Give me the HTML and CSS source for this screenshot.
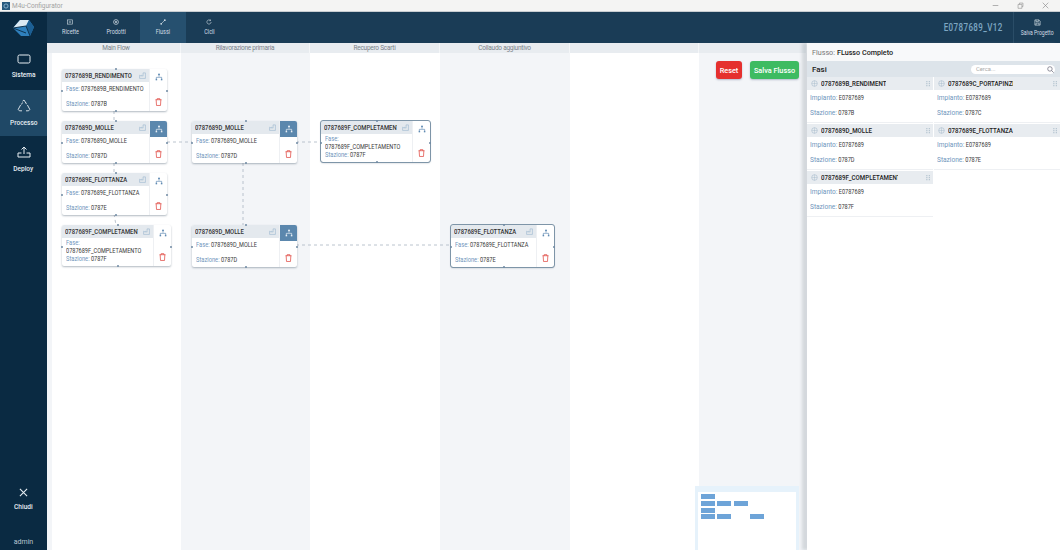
FILE: index.html
```html
<!DOCTYPE html>
<html lang="it">
<head>
<meta charset="utf-8">
<title>M4u-Configurator</title>
<link rel="stylesheet" href="styles.css">
</head>
<body>
<svg class="defs" width="0" height="0">
  <symbol id="i-tree" viewBox="0 0 12 12"><path d="M6 1.500v4M2 10V6.500h8V10" fill="none" stroke="currentColor" stroke-width="1"/><rect x="4.700" y="1" width="2.600" height="2.200" fill="currentColor"/><rect x="1" y="8.800" width="2.200" height="2.200" fill="currentColor"/><rect x="8.800" y="8.800" width="2.200" height="2.200" fill="currentColor"/></symbol>
  <symbol id="i-trash" viewBox="0 0 10 12"><path d="M.5 2.600h9M3 2.600V1h4v1.600M1.500 2.600l.5 8.600h6l.5-8.600" fill="none" stroke="currentColor" stroke-width="1.100"/></symbol>
  <symbol id="i-fact" viewBox="0 0 12 12"><path d="M1 11V5.500l3 1.700V5.500l3 1.700V1.500h4V11z" fill="none" stroke="currentColor" stroke-width=".9"/></symbol>
  <symbol id="i-cube" viewBox="0 0 12 12"><circle cx="6" cy="6" r="4.800" fill="none" stroke="currentColor" stroke-width=".9"/><path d="M1.500 6h9M6 1.200v9.600" stroke="currentColor" stroke-width=".7"/></symbol>
  <symbol id="i-grip" viewBox="0 0 6 8"><path d="M1 1v1.400M1 3.400v1.400M1 5.800v1.400M4 1v1.400M4 3.400v1.400M4 5.800v1.400" stroke="currentColor" stroke-width="1.400"/></symbol>
  <symbol id="i-save" viewBox="0 0 12 12"><path d="M1.500 1.500h7l2 2v7h-9zM3.500 1.500v3h4v-3M3.500 10.500v-3.500h5v3.500" fill="none" stroke="currentColor" stroke-width="1.100"/></symbol>
</svg>

<header class="titlebar">
  <div class="title-left">
    <svg class="title-logo" viewBox="0 0 10 10"><rect width="10" height="10" fill="#27597d"/><circle cx="5" cy="5" r="2.600" fill="none" stroke="#9cc3dd"/></svg>
    <span>M4u-Configurator</span>
  </div>
  <div class="winctl">
    <svg viewBox="0 0 10 10"><path d="M1 5h8" stroke="#888" stroke-width=".9"/></svg>
    <svg viewBox="0 0 10 10"><path d="M1.500 3.500h5.500v5.500h-5.500zM3.500 3.500V1.500h5v5H7" fill="none" stroke="#888" stroke-width=".8"/></svg>
    <svg viewBox="0 0 10 10"><path d="M1 1l8 8M9 1l-8 8" stroke="#888" stroke-width=".9"/></svg>
  </div>
</header>

<div class="app">
  <aside class="sidebar">
    <div class="logo">
      <svg viewBox="0 0 22 18" width="22" height="18"><path d="M0 9L7 1h9l5 7-4 9H8z" fill="#2f80bd"/><path d="M0 9L7 1h9L13 7z" fill="#dbe9f3"/><path d="M16 1l5 7-4 9-4-10z" fill="#1c5f94"/><path d="M0 9l13-2M13 7l4 10M0 9l13 5" fill="none" stroke="#0e3350" stroke-width="1"/></svg>
    </div>
    <a class="side-item">
      <svg viewBox="0 0 14 12" width="14" height="12"><rect x="1" y="2" width="12" height="8" rx="1.500" fill="none" stroke="currentColor"/></svg>
      <span>Sistema</span>
    </a>
    <a class="side-item active">
      <svg viewBox="0 0 14 14" width="14" height="14"><path d="M5.500 2.200L7 1l1.600 2.600M10.400 6l2.400 4.400-1.200 1.400H9M5 11.800H2.400L1.200 10.400 3.600 6M5.600 3.500L4.400 5.500M9.500 5.200L8.400 3" fill="none" stroke="currentColor" stroke-width=".9"/></svg>
      <span>Processo</span>
    </a>
    <a class="side-item">
      <svg viewBox="0 0 14 14" width="14" height="14"><path d="M1 8v4h12V8H9.500M4.500 8H1M7 9V2M4.500 4.500L7 2l2.500 2.500" fill="none" stroke="currentColor"/></svg>
      <span>Deploy</span>
    </a>
    <div class="side-spacer"></div>
    <a class="side-close">
      <svg viewBox="0 0 10 10" width="9" height="9"><path d="M1 1l8 8M9 1l-8 8" stroke="currentColor" stroke-width="1.200"/></svg>
      <span>Chiudi</span>
    </a>
    <div class="side-user">admin</div>
  </aside>

  <div class="main">
    <nav class="topbar">
      <a class="tab"><svg viewBox="0 0 10 10" width="6" height="6"><rect x="1" y="1.500" width="8" height="7" fill="none" stroke="currentColor"/><path d="M3 4h4M3 6h4" stroke="currentColor" stroke-width=".8"/></svg><span>Ricette</span></a>
      <a class="tab"><svg viewBox="0 0 10 10" width="6" height="6"><circle cx="5" cy="5" r="4" fill="none" stroke="currentColor" stroke-width="1.200"/><circle cx="5" cy="5" r="1.500" fill="currentColor"/></svg><span>Prodotti</span></a>
      <a class="tab on"><svg viewBox="0 0 10 10" width="6" height="6"><path d="M2 8l6-6" stroke="currentColor"/><circle cx="2" cy="8" r="1.500" fill="currentColor"/><circle cx="8" cy="2" r="1.500" fill="currentColor"/></svg><span>Flussi</span></a>
      <a class="tab"><svg viewBox="0 0 10 10" width="6" height="6"><path d="M8.500 5a3.500 3.500 0 1 1-1-2.500M7.500 .8v2h-2" fill="none" stroke="currentColor"/></svg><span>Cicli</span></a>
      <div class="top-spacer"></div>
      <div class="project">E0787689_V12</div>
      <a class="save-project"><svg width="7" height="7"><use href="#i-save"/></svg><span>Salva Progetto</span></a>
    </nav>

    <div class="content">
      <section class="canvas">
        <div class="col-heads">
          <div class="col-head c1">Main Flow</div>
          <div class="col-head c2">Rilavorazione primaria</div>
          <div class="col-head c3">Recupero Scarti</div>
          <div class="col-head c4">Collaudo aggiuntivo</div>
          <div class="col-head c5"></div>
          <div class="col-head c6"></div>
        </div>
        <div class="cols">
          <div class="col c1"></div>
          <div class="col gray c2"></div>
          <div class="col c3"></div>
          <div class="col gray c4"></div>
          <div class="col c5"></div>
          <div class="col gray c6"></div>
        </div>

        <svg class="edges" width="758" height="507" viewBox="0 0 758 507">
          <g fill="none" stroke="#a9b5c2" stroke-width=".8" stroke-dasharray="3 3">
            <path d="M67 68v10M67 120v10M67 171l2 11M120 99h25M249 99h25M196 120v62M249 202h155"/>
          </g>
        </svg>

        <article class="node n1">
          <div class="node-main">
            <div class="node-head"><b><span>0787689B_RENDIMENTO</span></b><svg width="7" height="7"><use href="#i-fact"/></svg></div>
            <div class="node-body">
              <p><em>Fase:</em> 0787689B_RENDIMENTO</p>
              <p><em>Stazione:</em> 0787B</p>
            </div>
          </div>
          <div class="node-act">
            <span class="act-top"><svg width="8" height="8"><use href="#i-tree"/></svg></span>
            <span class="act-del"><svg width="7" height="8"><use href="#i-trash"/></svg></span>
          </div>
          <i class="dot t"></i><i class="dot b"></i><i class="dot l"></i><i class="dot r"></i>
        </article>

        <article class="node n2">
          <div class="node-main">
            <div class="node-head"><b><span>0787689D_MOLLE</span></b><svg width="7" height="7"><use href="#i-fact"/></svg></div>
            <div class="node-body">
              <p><em>Fase:</em> 0787689D_MOLLE</p>
              <p><em>Stazione:</em> 0787D</p>
            </div>
          </div>
          <div class="node-act">
            <span class="act-top sel"><svg width="8" height="8"><use href="#i-tree"/></svg></span>
            <span class="act-del"><svg width="7" height="8"><use href="#i-trash"/></svg></span>
          </div>
          <i class="dot t"></i><i class="dot b"></i><i class="dot l"></i><i class="dot r"></i>
        </article>

        <article class="node n3">
          <div class="node-main">
            <div class="node-head"><b><span>0787689E_FLOTTANZA</span></b><svg width="7" height="7"><use href="#i-fact"/></svg></div>
            <div class="node-body">
              <p><em>Fase:</em> 0787689E_FLOTTANZA</p>
              <p><em>Stazione:</em> 0787E</p>
            </div>
          </div>
          <div class="node-act">
            <span class="act-top"><svg width="8" height="8"><use href="#i-tree"/></svg></span>
            <span class="act-del"><svg width="7" height="8"><use href="#i-trash"/></svg></span>
          </div>
          <i class="dot t"></i><i class="dot b"></i><i class="dot l"></i><i class="dot r"></i>
        </article>

        <article class="node n4 wide">
          <div class="node-main">
            <div class="node-head"><b><span>0787689F_COMPLETAMENTO</span></b><svg width="7" height="7"><use href="#i-fact"/></svg></div>
            <div class="node-body tall">
              <p><em>Fase:</em><br>0787689F_COMPLETAMENTO</p>
              <p><em>Stazione:</em> 0787F</p>
            </div>
          </div>
          <div class="node-act">
            <span class="act-top"><svg width="8" height="8"><use href="#i-tree"/></svg></span>
            <span class="act-del"><svg width="7" height="8"><use href="#i-trash"/></svg></span>
          </div>
          <i class="dot t"></i><i class="dot b"></i><i class="dot l"></i><i class="dot r"></i>
        </article>

        <article class="node n5">
          <div class="node-main">
            <div class="node-head"><b><span>0787689D_MOLLE</span></b><svg width="7" height="7"><use href="#i-fact"/></svg></div>
            <div class="node-body">
              <p><em>Fase:</em> 0787689D_MOLLE</p>
              <p><em>Stazione:</em> 0787D</p>
            </div>
          </div>
          <div class="node-act">
            <span class="act-top sel"><svg width="8" height="8"><use href="#i-tree"/></svg></span>
            <span class="act-del"><svg width="7" height="8"><use href="#i-trash"/></svg></span>
          </div>
          <i class="dot t"></i><i class="dot b"></i><i class="dot l"></i><i class="dot r"></i>
        </article>

        <article class="node n6">
          <div class="node-main">
            <div class="node-head"><b><span>0787689D_MOLLE</span></b><svg width="7" height="7"><use href="#i-fact"/></svg></div>
            <div class="node-body">
              <p><em>Fase:</em> 0787689D_MOLLE</p>
              <p><em>Stazione:</em> 0787D</p>
            </div>
          </div>
          <div class="node-act">
            <span class="act-top sel"><svg width="8" height="8"><use href="#i-tree"/></svg></span>
            <span class="act-del"><svg width="7" height="8"><use href="#i-trash"/></svg></span>
          </div>
          <i class="dot t"></i><i class="dot b"></i><i class="dot l"></i><i class="dot r"></i>
        </article>

        <article class="node n7 wide framed">
          <div class="node-main">
            <div class="node-head"><b><span>0787689F_COMPLETAMENTO</span></b><svg width="7" height="7"><use href="#i-fact"/></svg></div>
            <div class="node-body tall">
              <p><em>Fase:</em><br>0787689F_COMPLETAMENTO</p>
              <p><em>Stazione:</em> 0787F</p>
            </div>
          </div>
          <div class="node-act">
            <span class="act-top"><svg width="8" height="8"><use href="#i-tree"/></svg></span>
            <span class="act-del"><svg width="7" height="8"><use href="#i-trash"/></svg></span>
          </div>
          <i class="dot t"></i><i class="dot b"></i><i class="dot l"></i><i class="dot r"></i>
        </article>

        <article class="node n8 framed">
          <div class="node-main">
            <div class="node-head"><b><span>0787689E_FLOTTANZA</span></b><svg width="7" height="7"><use href="#i-fact"/></svg></div>
            <div class="node-body">
              <p><em>Fase:</em> 0787689E_FLOTTANZA</p>
              <p><em>Stazione:</em> 0787E</p>
            </div>
          </div>
          <div class="node-act">
            <span class="act-top"><svg width="8" height="8"><use href="#i-tree"/></svg></span>
            <span class="act-del"><svg width="7" height="8"><use href="#i-trash"/></svg></span>
          </div>
          <i class="dot t"></i><i class="dot b"></i><i class="dot l"></i><i class="dot r"></i>
        </article>

        <div class="flow-actions">
          <button class="btn red">Reset</button>
          <button class="btn green">Salva Flusso</button>
        </div>

        <div class="minimap">
          <div class="minimap-in">
            <i class="mm m1"></i><i class="mm m2"></i><i class="mm m3"></i><i class="mm m4"></i>
            <i class="mm m5"></i><i class="mm m6"></i><i class="mm m7"></i><i class="mm m8"></i>
          </div>
        </div>
      </section>

      <aside class="panel">
        <div class="panel-title"><span>Flusso:</span> <b>FLusso Completo</b></div>
        <div class="panel-bar">
          <b>Fasi</b>
          <div class="search"><span>Cerca...</span><svg viewBox="0 0 10 10" width="7" height="7"><circle cx="4.200" cy="4.200" r="3.200" fill="none" stroke="#667" stroke-width="1"/><path d="M6.500 6.500L9.500 9.500" stroke="#667" stroke-width="1"/></svg></div>
        </div>
        <div class="phases">
          <div class="phase">
            <div class="phase-head"><svg class="ph-ic" width="7" height="7"><use href="#i-cube"/></svg><b><span>0787689B_RENDIMENTO</span></b><svg class="ph-gr" width="5" height="7"><use href="#i-grip"/></svg></div>
            <div class="phase-body"><p><em>Impianto:</em> E0787689</p><p><em>Stazione:</em> 0787B</p></div>
          </div>
          <div class="phase">
            <div class="phase-head"><svg class="ph-ic" width="7" height="7"><use href="#i-cube"/></svg><b><span>0787689C_PORTAPINZE</span></b><svg class="ph-gr" width="5" height="7"><use href="#i-grip"/></svg></div>
            <div class="phase-body"><p><em>Impianto:</em> E0787689</p><p><em>Stazione:</em> 0787C</p></div>
          </div>
          <div class="phase">
            <div class="phase-head"><svg class="ph-ic" width="7" height="7"><use href="#i-cube"/></svg><b><span>0787689D_MOLLE</span></b><svg class="ph-gr" width="5" height="7"><use href="#i-grip"/></svg></div>
            <div class="phase-body"><p><em>Impianto:</em> E0787689</p><p><em>Stazione:</em> 0787D</p></div>
          </div>
          <div class="phase">
            <div class="phase-head"><svg class="ph-ic" width="7" height="7"><use href="#i-cube"/></svg><b><span>0787689E_FLOTTANZA</span></b><svg class="ph-gr" width="5" height="7"><use href="#i-grip"/></svg></div>
            <div class="phase-body"><p><em>Impianto:</em> E0787689</p><p><em>Stazione:</em> 0787E</p></div>
          </div>
          <div class="phase">
            <div class="phase-head"><svg class="ph-ic" width="7" height="7"><use href="#i-cube"/></svg><b><span>0787689F_COMPLETAMENTO</span></b><svg class="ph-gr" width="5" height="7"><use href="#i-grip"/></svg></div>
            <div class="phase-body"><p><em>Impianto:</em> E0787689</p><p><em>Stazione:</em> 0787F</p></div>
          </div>
        </div>
      </aside>
    </div>
  </div>
</div>
</body>
</html>
```
FILE: styles.css
```css
* { box-sizing: border-box; }
html, body { margin: 0; height: 100%; }
body {
  width: 1060px; height: 550px; overflow: hidden;
  font-family: Roboto, "Liberation Sans", sans-serif;
  display: flex; flex-direction: column;
  background: #fff; color: #333;
}
.defs { position: absolute; }
p { margin: 0; }
em { font-style: normal; }

.titlebar {
  height: 12px; flex: none;
  display: flex; justify-content: space-between; align-items: center;
  background: #f4f4f3; border-bottom: 1px solid #c8cdd1;
  font-size: 6.500px; color: #a2a2a2;
}
.title-left { display: flex; align-items: center; gap: 2px; padding-left: 2px; }
.title-logo { width: 8px; height: 8px; }
.winctl { display: flex; gap: 18px; padding-right: 11px; }
.winctl svg { width: 7px; height: 7px; }

.app { flex: 1; display: flex; min-height: 0; }

.sidebar {
  width: 47px; flex: none;
  background: #0a2a42; color: #e6edf2;
  display: flex; flex-direction: column; align-items: stretch;
}
.logo { height: 31px; display: flex; align-items: center; justify-content: center; }
.side-item {
  height: 46.500px; display: flex; flex-direction: column; align-items: center; justify-content: center;
  gap: 5px; font-size: 8px; font-weight: 500;
}
.side-item span, .side-close span { transform: scaleX(.82); }
.side-item.active { background: #1f4866; }
.side-spacer { flex: 1; }
.side-close { display: flex; flex-direction: column; align-items: center; gap: 5px; font-size: 8px; font-weight: 500; padding-bottom: 27px; }
.side-user { text-align: center; font-size: 7px; color: #b9c6d0; padding-bottom: 4px; }

.main { flex: 1; display: flex; flex-direction: column; min-width: 0; }

.topbar { height: 31px; flex: none; background: #1a3c56; color: #d5dfe6; display: flex; }
.tab {
  width: 46.300px; display: flex; flex-direction: column; align-items: center; justify-content: center;
  gap: 3px; font-size: 6.800px;
}
.tab span { transform: scaleX(.8); }
.tab.on { background: #26506f; }
.top-spacer { flex: 1; }
.project {
  align-self: center; font-size: 10.500px; font-weight: 500; letter-spacing: .55px; color: #7ea7c3;
  margin-right: 10px; transform: scaleX(.76); transform-origin: right center;
}
.save-project {
  width: 47px; border-left: 1px solid #2a4d67;
  display: flex; flex-direction: column; align-items: center; justify-content: center; gap: 3px;
  font-size: 6.500px; white-space: nowrap;
}
.save-project span { transform: scaleX(.78); }

.content { flex: 1; display: flex; min-height: 0; }

.canvas { width: 760px; flex: none; position: relative; background: #f3f5f8; display: flex; flex-direction: column; overflow: hidden; }
.col-heads { height: 10px; flex: none; display: flex; background: #e8ecf0; }
.col-head {
  text-align: center; font-size: 6.500px; letter-spacing: -.25px; line-height: 10px; color: #7b8289;
  border-right: 1px solid #f4f6f8;
}
.col-head.c1 { padding-left: 5px; }
.c1 { width: 134px; }
.c2 { width: 129px; }
.c3 { width: 130px; }
.c4 { width: 130px; }
.c5 { width: 129px; }
.c6 { flex: 1; }
.cols { flex: 1; display: flex; }
.col { background: #fff; }
.col.gray { background: #f3f5f8; }
.col.c1 { background: linear-gradient(90deg, #f3f5f8 5px, #fff 5px); }

.edges { position: absolute; left: 0; top: 0; }

.node {
  position: absolute; width: 105px; height: 42px;
  display: flex; background: #fff; border-radius: 2px;
  box-shadow: 0 1px 2px rgba(60, 80, 100, .4);
}
.node.wide { width: 109px; height: 41px; }
.node.framed { outline: 1px solid #7e95a8; }
.n8 { width: 103px; }
.n1 { left: 15px; top: 26px; }
.n2 { left: 15px; top: 78px; }
.n3 { left: 15px; top: 130px; }
.n4 { left: 15px; top: 182px; }
.n5 { left: 145px; top: 78px; }
.n6 { left: 145px; top: 182px; }
.n7 { left: 274px; top: 78px; }
.n8 { left: 404px; top: 182px; }
.node-main { flex: 1; min-width: 0; border-right: 1px solid #eef0f3; display: flex; flex-direction: column; }
.node-head {
  height: 13px; flex: none; background: #e4e9ee; display: flex; align-items: center; justify-content: space-between;
  padding: 0 3px; gap: 5px; color: #8fb0cc; border-radius: 2px 0 0 0;
}
.node-head svg { flex: none; }
.node-head b {
  flex: 1; min-width: 0; overflow: hidden; white-space: nowrap;
  font-size: 7.200px; font-weight: 500; color: #333;
}
.node-head b span, .phase-head b span { display: inline-block; transform: scaleX(.82); transform-origin: left center; }
.node-body {
  flex: 1; padding: 0 4px; font-size: 6.800px; color: #3a3a3a;
  display: flex; flex-direction: column; justify-content: space-around;
}
.node-body p, .phase-body p { white-space: nowrap; transform: scaleX(.82); transform-origin: left center; }
.node-body em { color: #6f96bc; font-size: 7px; }
.node-body.tall { padding-top: 2px; justify-content: flex-start; gap: 1px; line-height: 7.500px; }
.node-act { width: 17px; flex: none; display: flex; flex-direction: column; justify-content: space-between; align-items: stretch; }
.act-top { height: 16px; display: flex; align-items: center; justify-content: center; color: #5f8ab2; border-radius: 0 2px 0 0; }
.act-top.sel { background: #5b87ad; color: #e9f0f6; }
.act-del { height: 16px; display: flex; align-items: center; justify-content: center; color: #e0443e; padding-bottom: 2px; }

.dot { position: absolute; width: 2px; height: 2px; border-radius: 50%; background: #6f8aa3; }
.dot.t { top: -1px; left: 50%; }
.dot.b { bottom: -1px; left: 50%; }
.dot.l { left: -1px; top: 50%; }
.dot.r { right: -1px; top: 50%; }

.flow-actions { position: absolute; left: 669px; top: 18px; display: flex; gap: 8px; }
.btn {
  height: 18px; border: 0; border-radius: 3px; color: #fff; padding: 0;
  font-family: inherit; font-size: 7.300px; font-weight: 500;
  box-shadow: 0 1px 2px rgba(60, 80, 120, .35);
}
.btn.red { width: 26px; background: #e5302e; }
.btn.green { width: 49px; background: #3dbb61; }

.minimap {
  position: absolute; left: 648px; top: 443px; width: 104px; height: 64px;
  background: #e6f2fb; padding: 6px 3px 0 3px;
}
.minimap-in { position: relative; height: 100%; background: #fff; }
.mm { position: absolute; width: 14px; height: 5px; background: #6ea4d8; }
.m1 { left: 3px; top: 2px; }
.m2 { left: 3px; top: 9px; }
.m3 { left: 19px; top: 9px; }
.m4 { left: 36px; top: 9px; }
.m5 { left: 3px; top: 16px; }
.m6 { left: 3px; top: 22px; }
.m7 { left: 19px; top: 22px; }
.m8 { left: 52px; top: 22px; }

.panel { flex: 1; min-width: 0; background: #fff; display: flex; flex-direction: column; box-shadow: -5px 0 3px rgba(120, 130, 140, .25); position: relative; }
.panel-title { height: 18px; flex: none; display: flex; align-items: center; gap: 2px; padding-left: 5px; font-size: 7.200px; background: #f8f9fa; }
.panel-title span { color: #777; }
.panel-title b { font-weight: 500; color: #222; }
.panel-bar { height: 16px; flex: none; background: #dde4ea; display: flex; align-items: center; justify-content: space-between; padding: 0 5px 0 5px; }
.panel-bar b { font-size: 8px; font-weight: 500; color: #222; }
.search {
  width: 84px; height: 9px; border-radius: 5px; background: #fff;
  display: flex; align-items: center; justify-content: space-between; padding: 0 1px 0 5px;
  font-size: 5.800px; color: #aaa;
}
.phases { display: grid; grid-template-columns: 1fr 1fr; align-content: start; row-gap: 1px; column-gap: 1px; }
.phase { min-width: 0; height: 46px; border-bottom: 1px solid #eef0f3; display: flex; flex-direction: column; }
.phase-head { height: 13px; flex: none; background: #e8ecf0; display: flex; align-items: center; padding: 0 2px 0 4px; }
.ph-ic { color: #9eb5c7; flex: none; margin-right: 3px; }
.phase-head b {
  font-size: 7.500px; font-weight: 500; color: #222; white-space: nowrap; overflow: hidden; width: 65px; flex: none;
}
.phase:last-child .phase-head b { width: 77px; }
.ph-gr { color: #b4c3cf; margin-left: auto; flex: none; }
.phase-body {
  flex: 1; padding: 0 3px 2px; font-size: 6.800px; color: #3a3a3a;
  display: flex; flex-direction: column; justify-content: space-around;
}
.phase-body em { color: #6f96bc; font-size: 8px; }
```
